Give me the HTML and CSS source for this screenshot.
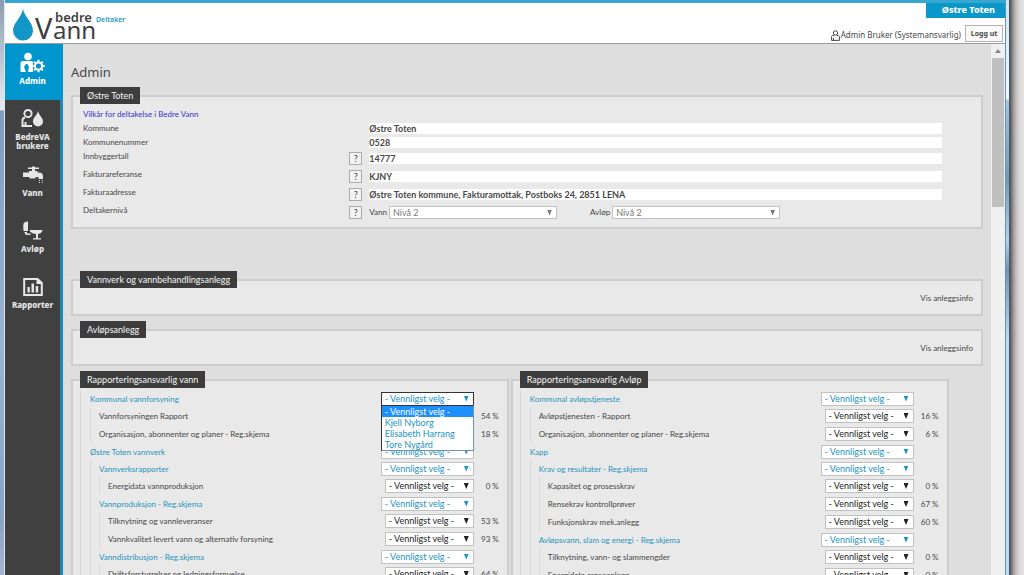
FILE: index.html
```html
<!DOCTYPE html>
<html lang="no">
<head>
<meta charset="utf-8">
<title>bedre Vann - Admin</title>
<link rel="stylesheet" href="styles.css">
</head>
<body>
<div class="frame-left"></div>
<div class="window">
  <header class="header">
    <svg class="logo" width="130" height="40" viewBox="0 0 130 40" role="img" aria-label="bedre Vann Deltaker">
      <path class="logo-drop" d="M16 6C14 15 7 19 6 27a10 10 0 0 0 20 1C26 19 18 15 16 6z"/>
      <text class="logo-big" x="28" y="36">V</text>
      <text class="logo-mid" x="46" y="36">ann</text>
      <text class="logo-small" x="48" y="19">bedre</text>
      <text class="logo-tag" x="89" y="19">Deltaker</text>
    </svg>
    <div class="header-right">
      <div class="badge">Østre Toten</div>
      <div class="user-bar">
        <svg class="user-icon" width="9" height="11" viewBox="0 0 9 11"><circle cx="4.500" cy="3" r="2.200"/><path d="M3 5.500H1.500L.6 6.500v3.900h7.800V6.500L7.500 5.500H6M2.500 8v2.300"/></svg>
        <span class="user">Admin Bruker (Systemansvarlig)</span>
        <button class="logout" type="button">Logg ut</button>
      </div>
    </div>
  </header>
  <div class="body">
    <nav class="sidebar">
      <a class="nav-item active" href="#">
        <svg width="26" height="22" viewBox="0 0 26 22"><circle cx="8" cy="5.500" r="3.800"/><path fill-rule="evenodd" d="M.5 21V12.500Q.5 10 3 10h9q1 0 1 2v9zM6 13l-2 3 2 5h2l1-5-1.500-3z"/><circle class="gear" cx="18.500" cy="15" r="3.600"/><path class="teeth" d="M18.500 8.800v2.500M18.500 18.700v2.500M12.300 15h2.500M22.200 15h2.500M14.100 10.600l1.800 1.800M21.100 17.600l1.800 1.800M22.900 10.600l-1.800 1.800M15.900 17.600l-1.800 1.800"/></svg>
        <span>Admin</span>
      </a>
      <a class="nav-item" href="#">
        <svg width="24" height="22" viewBox="0 0 24 22"><g class="outline"><circle cx="7" cy="6.500" r="3.600"/><path d="M4 11H2.500L1.500 12.500V19H11M4.500 15v4"/></g><path d="M17 4c-1 4.500-5 6.500-5 10.500a5 5 0 0 0 10 0c0-4-4-6-5-10.500z"/></svg>
        <span>BedreVA brukere</span>
      </a>
      <a class="nav-item" href="#">
        <svg width="22" height="22" viewBox="0 0 22 22"><path d="M6 4.500h4V3.500h3v1h4V6h-4v2h2.500v1.500H17q4 0 4 4v2.500h-4.500V14H13.500v1.500h-6V14H1V9.500h6V8h3V6H6z"/><path class="dots" d="M17.500 17v4M20.200 17v4"/></svg>
        <span>Vann</span>
      </a>
      <a class="nav-item" href="#">
        <svg width="22" height="22" viewBox="0 0 22 22"><path d="M1.500 4.500Q2.500 2.500 6 2.500v9.500H1.500Q1 8 1.500 4.500zM2.500 13H5v1.500h3.500V16H5.500Q2.500 16 2.500 13zM8 11H20.500Q20 14.500 16 15v4.200h3V20.500h-8v-1.300h3V15Q10 14.500 8 12.500z"/></svg>
        <span>Avløp</span>
      </a>
      <a class="nav-item" href="#">
        <svg width="22" height="22" viewBox="0 0 22 22"><path class="sheet" d="M2.200 4H15.500L19.800 8V20H2.200z"/><path d="M14.500 3v6h6zM5.500 12h2.300v5.500H5.500zM9.500 8.500h2.500v9H9.500zM13.700 11h2.500v6.500h-2.500z"/></svg>
        <span>Rapporter</span>
      </a>
    </nav>
    <main class="content">
      <h1>Admin</h1>
      <fieldset class="panel info">
        <legend>Østre Toten</legend>
        <a class="terms" href="#">Vilkår for deltakelse i Bedre Vann</a>
        <div class="field short"><label for="kommune">Kommune</label><input id="kommune" value="Østre Toten"></div>
        <div class="field short"><label for="nummer">Kommunenummer</label><input id="nummer" value="0528"></div>
        <div class="field"><label for="innb">Innbyggertall</label><button class="help" type="button">?</button><input id="innb" value="14777"></div>
        <div class="field"><label for="ref">Fakturareferanse</label><button class="help" type="button">?</button><input id="ref" value="KJNY"></div>
        <div class="field"><label for="adr">Fakturaadresse</label><button class="help" type="button">?</button><input id="adr" value="Østre Toten kommune, Fakturamottak, Postboks 24, 2851 LENA"></div>
        <div class="field"><span class="label">Deltakernivå</span><button class="help" type="button">?</button>
          <div class="levels">
            <label for="nv">Vann</label><span class="select level"><select id="nv"><option>Nivå 2</option></select></span>
            <label class="second" for="na">Avløp</label><span class="select level"><select id="na"><option>Nivå 2</option></select></span>
          </div>
        </div>
      </fieldset>
      <fieldset class="panel plant"><legend>Vannverk og vannbehandlingsanlegg</legend><a href="#">Vis anleggsinfo</a></fieldset>
      <fieldset class="panel plant"><legend>Avløpsanlegg</legend><a href="#">Vis anleggsinfo</a></fieldset>
      <div class="columns">
        <fieldset class="panel report">
          <legend>Rapporteringsansvarlig vann</legend>
          <ul class="tree">
            <li><div class="row group"><label for="v1">Kommunal vannforsyning</label><span class="select open"><select id="v1"><option>- Vennligst velg -</option></select>
              <span class="menu" role="listbox"><span class="option chosen" role="option">- Vennligst velg -</span><span class="option" role="option">Kjell Nyborg</span><span class="option" role="option">Elisabeth Harrang</span><span class="option" role="option">Tore Nygård</span></span></span><span class="pct"></span></div>
              <ul>
                <li><div class="row"><label for="v2">Vannforsyningen Rapport</label><span class="select"><select id="v2"><option>- Vennligst velg -</option></select></span><span class="pct">54 %</span></div></li>
                <li><div class="row"><label for="v3">Organisasjon, abonnenter og planer - Reg.skjema</label><span class="select"><select id="v3"><option>- Vennligst velg -</option></select></span><span class="pct">18 %</span></div></li>
              </ul></li>
            <li><div class="row group"><label for="v4">Østre Toten vannverk</label><span class="select"><select id="v4"><option>- Vennligst velg -</option></select></span><span class="pct"></span></div>
              <ul>
                <li><div class="row group"><label for="v5">Vannverksrapporter</label><span class="select"><select id="v5"><option>- Vennligst velg -</option></select></span><span class="pct"></span></div>
                  <ul>
                    <li><div class="row"><label for="v6">Energidata vannproduksjon</label><span class="select"><select id="v6"><option>- Vennligst velg -</option></select></span><span class="pct">0 %</span></div></li>
                  </ul></li>
                <li><div class="row group"><label for="v7">Vannproduksjon - Reg.skjema</label><span class="select"><select id="v7"><option>- Vennligst velg -</option></select></span><span class="pct"></span></div>
                  <ul>
                    <li><div class="row"><label for="v8">Tilknytning og vannleveranser</label><span class="select"><select id="v8"><option>- Vennligst velg -</option></select></span><span class="pct">53 %</span></div></li>
                    <li><div class="row"><label for="v9">Vannkvalitet levert vann og alternativ forsyning</label><span class="select"><select id="v9"><option>- Vennligst velg -</option></select></span><span class="pct">93 %</span></div></li>
                  </ul></li>
                <li><div class="row group"><label for="v10">Vanndistribusjon - Reg.skjema</label><span class="select"><select id="v10"><option>- Vennligst velg -</option></select></span><span class="pct"></span></div>
                  <ul>
                    <li><div class="row"><label for="v11">Driftsforstyrrelser og ledningsfornyelse</label><span class="select"><select id="v11"><option>- Vennligst velg -</option></select></span><span class="pct">64 %</span></div></li>
                  </ul></li>
              </ul></li>
          </ul>
        </fieldset>
        <fieldset class="panel report">
          <legend>Rapporteringsansvarlig Avløp</legend>
          <ul class="tree">
            <li><div class="row group"><label for="a1">Kommunal avløpstjeneste</label><span class="select"><select id="a1"><option>- Vennligst velg -</option></select></span><span class="pct"></span></div>
              <ul>
                <li><div class="row"><label for="a2">Avløpstjenesten - Rapport</label><span class="select"><select id="a2"><option>- Vennligst velg -</option></select></span><span class="pct">16 %</span></div></li>
                <li><div class="row"><label for="a3">Organisasjon, abonnenter og planer - Reg.skjema</label><span class="select"><select id="a3"><option>- Vennligst velg -</option></select></span><span class="pct">6 %</span></div></li>
              </ul></li>
            <li><div class="row group"><label for="a4">Kapp</label><span class="select"><select id="a4"><option>- Vennligst velg -</option></select></span><span class="pct"></span></div>
              <ul>
                <li><div class="row group"><label for="a5">Krav og resultater - Reg.skjema</label><span class="select"><select id="a5"><option>- Vennligst velg -</option></select></span><span class="pct"></span></div>
                  <ul>
                    <li><div class="row"><label for="a6">Kapasitet og prosesskrav</label><span class="select"><select id="a6"><option>- Vennligst velg -</option></select></span><span class="pct">0 %</span></div></li>
                    <li><div class="row"><label for="a7">Rensekrav kontrollprøver</label><span class="select"><select id="a7"><option>- Vennligst velg -</option></select></span><span class="pct">67 %</span></div></li>
                    <li><div class="row"><label for="a8">Funksjonskrav mek.anlegg</label><span class="select"><select id="a8"><option>- Vennligst velg -</option></select></span><span class="pct">60 %</span></div></li>
                  </ul></li>
                <li><div class="row group"><label for="a9">Avløpsvann, slam og energi - Reg.skjema</label><span class="select"><select id="a9"><option>- Vennligst velg -</option></select></span><span class="pct"></span></div>
                  <ul>
                    <li><div class="row"><label for="a10">Tilknytning, vann- og slammengder</label><span class="select"><select id="a10"><option>- Vennligst velg -</option></select></span><span class="pct">0 %</span></div></li>
                    <li><div class="row"><label for="a11">Energidata renseanlegg</label><span class="select"><select id="a11"><option>- Vennligst velg -</option></select></span><span class="pct">0 %</span></div></li>
                  </ul></li>
              </ul></li>
          </ul>
        </fieldset>
      </div>
    </main>
    <div class="scrollbar"><div class="scroll-up"></div><div class="thumb"></div></div>
  </div>
</div>
<div class="frame-right"></div>
<div class="desktop"></div>
</body>
</html>
```
FILE: styles.css
```css
* { box-sizing: border-box; }
body {
  margin: 0;
  height: 100vh;
  display: flex;
  overflow: hidden;
  font: 8px/14px Lato, "Noto Sans", sans-serif;
  color: #484848;
  background: #dedede;
}
a { text-decoration: none; color: inherit; }
button, input, select { font: inherit; color: inherit; margin: 0; }

.frame-left {
  width: 5px;
  border-right: 1px solid #dfe8f0;
  background: linear-gradient(#8b9cb0, #e3e8ee 105px, #e3e8ee 110px, #7f9cc0 111px, #9ab3d2 60%, #8aa2c4 90%, #a3b6d0);
}
.frame-right {
  width: 5px;
  border-left: 1px solid #5f93b5;
  background: linear-gradient(90deg, transparent 3px, #44586e 3px), linear-gradient(#d5e2ee, #f4f8fb 99px, #a9c5df 100px, #7898b8 180px, #b9d2ea 240px, #7693b4 270px, #c3dbf1 340px, #c3dbf1);
}
.desktop {
  width: 14px;
  background: linear-gradient(90deg, #555, #a8a6a4 4px, #d2d0d0 8px, #e4e2e0 13px);
}

.window { flex: 1; min-width: 0; display: flex; flex-direction: column; }
.header {
  height: 44px;
  flex: none;
  display: flex;
  justify-content: space-between;
  background: #fff;
  border-top: 3px solid #38a7cf;
  border-bottom: 1px solid #9c9c9c;
}
.logo { margin-left: 2px; overflow: visible; font-family: "Noto Sans", sans-serif; }
.logo-drop { fill: #1296c8; }
.logo text { fill: #3f3f3f; }
.logo .logo-big { font-size: 29px; }
.logo .logo-mid { font-size: 24px; }
.logo .logo-small { font-size: 13px; font-weight: 600; }
.logo .logo-tag { font-size: 7px; font-weight: 600; fill: #1f97c6; }
.header-right { display: flex; flex-direction: column; align-items: flex-end; }
.badge {
  width: 79px;
  height: 15px;
  padding-right: 10px;
  text-align: right;
  font-family: "Noto Sans", sans-serif;
  font-weight: 800;
  font-size: 9px;
  line-height: 13px;
  color: #fff;
  background: #0a98cb;
}
.user-bar { display: flex; align-items: center; padding: 6px 2px 0 0; }
.user-icon { fill: none; stroke: #444; stroke-width: 1; margin: 4px 1px 0 0; }
.user { padding-top: 4px; margin-right: 4px; font-family: "Noto Sans", sans-serif; }
.logout {
  width: 38px;
  height: 17px;
  padding: 0;
  border: 1px solid #b9b0b0;
  background: #fafafa;
  font-family: "Noto Sans", sans-serif;
  font-size: 7px;
  line-height: 13px;
  font-weight: 700;
}

.body { flex: 1; min-height: 0; display: flex; }
.sidebar { width: 58px; flex: none; border-right: 3px solid #1f8ab5; background: #404040; font-family: "Noto Sans", sans-serif; }
.nav-item {
  height: 56px;
  padding-top: 7px;
  display: flex;
  flex-direction: column;
  align-items: center;
  gap: 3px;
  text-align: center;
  font-weight: 800;
  line-height: 9px;
  color: #e6e6e6;
}
.nav-item svg { fill: currentColor; flex: none; }
.active { background: #0095cd; color: #fff; margin-right: -3px; padding-right: 3px; }
.gear { fill: none; stroke: currentColor; stroke-width: 2; }
.teeth { stroke: currentColor; stroke-width: 2; }
.outline { fill: none; stroke: currentColor; stroke-width: 2; }
.sheet { fill: none; stroke: currentColor; stroke-width: 2; }
.dots { fill: none; stroke: currentColor; stroke-width: 1; stroke-dasharray: 1 1; }

.content { flex: 1; min-width: 0; padding: 18px 8px 0; overflow: hidden; }
h1 { margin: 0 0 5px; font-size: 13px; line-height: 20px; font-weight: 400; font-family: "Noto Sans", sans-serif; }
.panel { min-width: 0; margin: 0; padding: 0 7px; border: 2px solid #cdcdcd; background: #e9e9e9; }
legend {
  padding: 0 7px;
  line-height: 17px;
  font-size: 9px;
  color: #f4f4f4;
  background: #3d3d3d;
}
.info { padding: 3px 39px 6px 10px; margin-bottom: 42px; }
.info legend { margin-left: -3px; }
.terms { display: block; color: #3a30cc; }
.field { height: 18px; display: grid; grid-template-columns: 31% 20px minmax(0, 1fr); }
.field.short { height: 14px; grid-template-columns: 31% minmax(0, 1fr); }
.field.short input { margin-left: 20px; }
.field input {
  align-self: center;
  min-width: 0;
  height: 11px;
  padding: 0;
  border: 0;
  background: #fff;
  font-size: 9px;
  font-weight: 700;
  line-height: 11px;
}
.help {
  align-self: center;
  width: 13px;
  height: 13px;
  padding: 0;
  border: 1px solid #ababab;
  background: #f3f3f3;
  font-size: 9px;
  line-height: 11px;
}
.levels { display: flex; align-items: center; gap: 2px; }
.levels .second { margin-left: 31px; }

.select { position: relative; flex: none; width: 89px; height: 14px; color: #222; }
.select select {
  display: block;
  width: 100%;
  height: 100%;
  padding: 0 0 0 3px;
  appearance: none;
  border: 1px solid #c2c2c2;
  border-radius: 0;
  background: #fff;
  font-size: 9px;
  line-height: 12px;
}
.select::after {
  content: "";
  position: absolute;
  right: 5px;
  top: 4px;
  width: 5px;
  height: 6px;
  background: currentColor;
  clip-path: polygon(0 0, 100% 0, 50% 100%);
  pointer-events: none;
}
.level { width: 168px; height: 13px; color: #777; }
.group .select { width: 93px; color: #1c93c0; }
.open select { border-color: #333; }
.menu {
  position: absolute;
  z-index: 1;
  top: 13px;
  left: 0;
  right: 0;
  border: 1px solid #333;
  border-right-color: #6d93ae;
  border-bottom-color: #6d93ae;
  background: #fff;
  font-size: 9px;
  line-height: 11px;
}
.option { display: block; height: 11px; padding-left: 3px; white-space: nowrap; }
.option.chosen { color: #fff; background: #1e8fff; }

.plant { padding: 3px 8px 9px 7px; margin-bottom: 5px; }
.plant a { display: block; text-align: right; }
.columns { display: grid; grid-template-columns: 48% 48%; gap: 2px; align-items: start; }
.report { padding: 2px 8px 20px 7px; }
.tree, .tree ul { list-style: none; margin: 0; padding: 0 0 0 8px; border-left: 1px solid #d9d9d9; }
.tree { padding-left: 9px; }
.row { height: 18px; display: flex; align-items: center; white-space: nowrap; }
.row.group { height: 17px; color: #2794bd; }
.row label { flex: 1; min-width: 0; }
.pct { width: 25px; text-align: right; }

.scrollbar { width: 14px; flex: none; background: #f0f0f0; padding: 0 1px; }
.scroll-up { height: 14px; display: grid; place-items: center; }
.scroll-up::before { content: ""; width: 6px; height: 4px; background: #858585; clip-path: polygon(50% 0, 100% 100%, 0 100%); }
.thumb { height: 28%; background: #c0c0c0; }
```
